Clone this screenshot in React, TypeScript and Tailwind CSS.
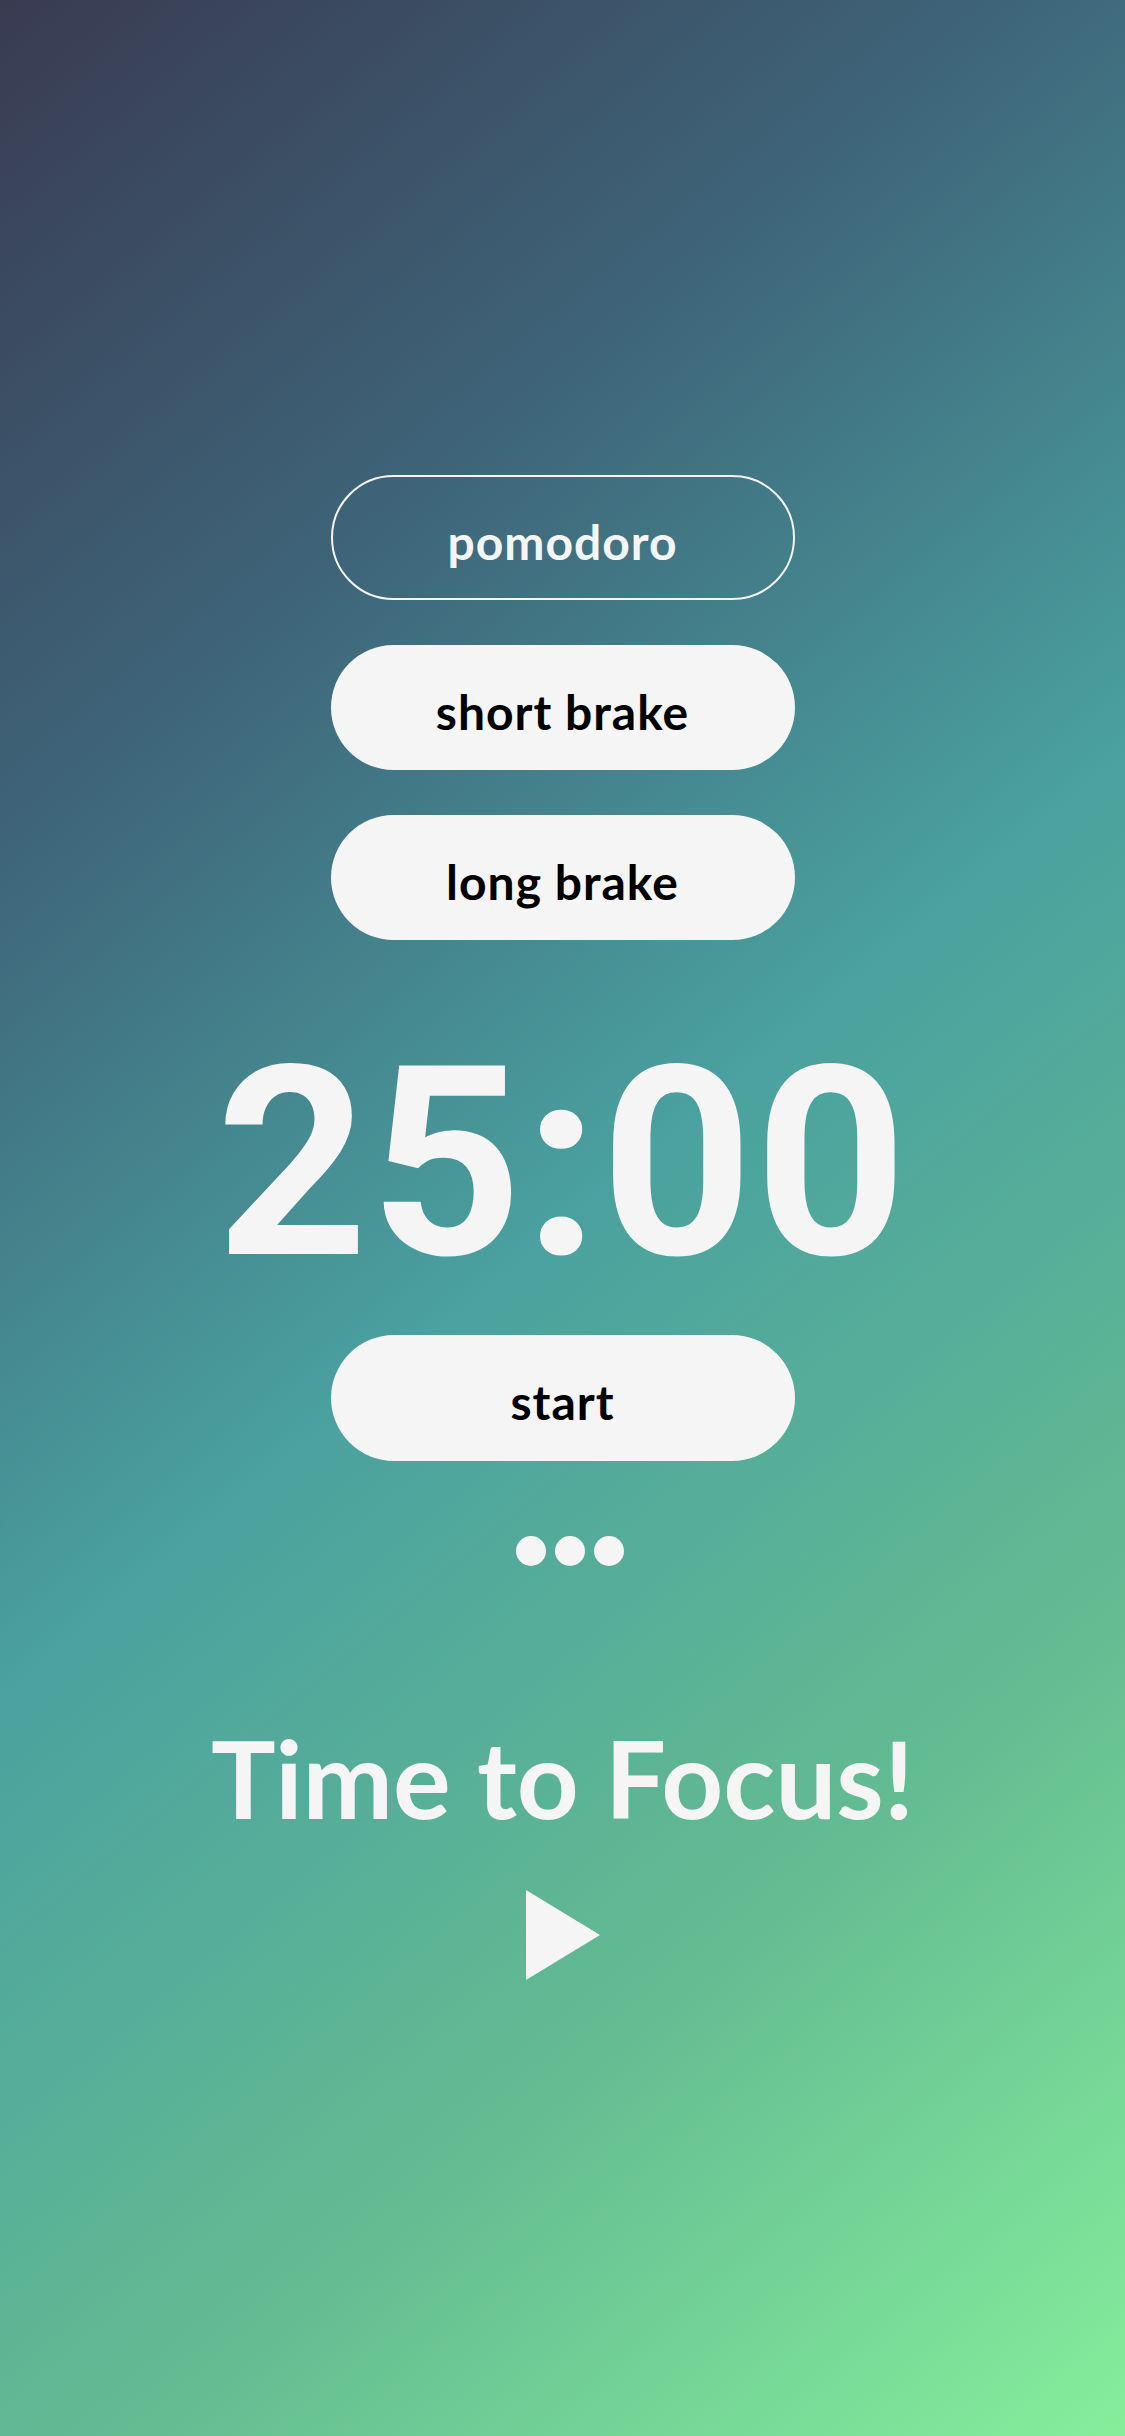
import React from 'react';

const modes = [
  { id: 'pomodoro', label: 'pomodoro' },
  { id: 'short', label: 'short brake' },
  { id: 'long', label: 'long brake' },
];

const PlayIcon: React.FC = () => (
  <svg width="74" height="90" viewBox="0 0 74 90" fill="#f5f5f5">
    <polygon points="0,0 74,45 0,90" />
  </svg>
);

const App: React.FC = () => {
  const active = 'pomodoro';

  return (
    <div className="min-h-screen w-full bg-[linear-gradient(140deg,#393b51_0%,#3e6479_25%,#4aa19f_50%,#63bb92_75%,#86ee9b_100%)] font-[Lato,sans-serif] text-[#f5f5f5]">
      <div className="flex flex-col items-center pt-[475px]">
        {/* Mode switcher */}
        <div className="flex flex-col gap-[45px]">
          {modes.map(m =>
            m.id === active ? (
              <button
                key={m.id}
                className="flex h-[125px] w-[464px] items-center justify-center rounded-full border-2 border-[#f5f5f5] pt-[8px] text-[48px] font-bold leading-none tracking-[1px] text-[#f5f5f5]"
              >
                {m.label}
              </button>
            ) : (
              <button
                key={m.id}
                className="flex h-[125px] w-[464px] items-center justify-center rounded-full bg-[#f5f5f5] pt-[8px] text-[48px] font-bold leading-none tracking-[1px] text-black"
              >
                {m.label}
              </button>
            )
          )}
        </div>

        {/* Timer */}
        <div className="mt-[91px] font-[Roboto,sans-serif] text-[265px] font-bold leading-none tracking-[2px]">
          25:00
        </div>

        <button className="mt-[39px] flex h-[126px] w-[464px] items-center justify-center rounded-full bg-[#f5f5f5] pt-[8px] text-[48px] font-bold leading-none tracking-[1px] text-black">
          start
        </button>

        {/* Session dots */}
        <div className="ml-[15px] mt-[75px] flex gap-[9px]">
          {[0, 1, 2].map(i => (
            <div key={i} className="h-[30px] w-[30px] rounded-full bg-[#f5f5f5]" />
          ))}
        </div>

        <h1 className="mt-[157px] text-[108px] font-bold leading-none">Time to Focus!</h1>

        <div className="mt-[59px]">
          <PlayIcon />
        </div>
      </div>
    </div>
  );
};

export default App;
